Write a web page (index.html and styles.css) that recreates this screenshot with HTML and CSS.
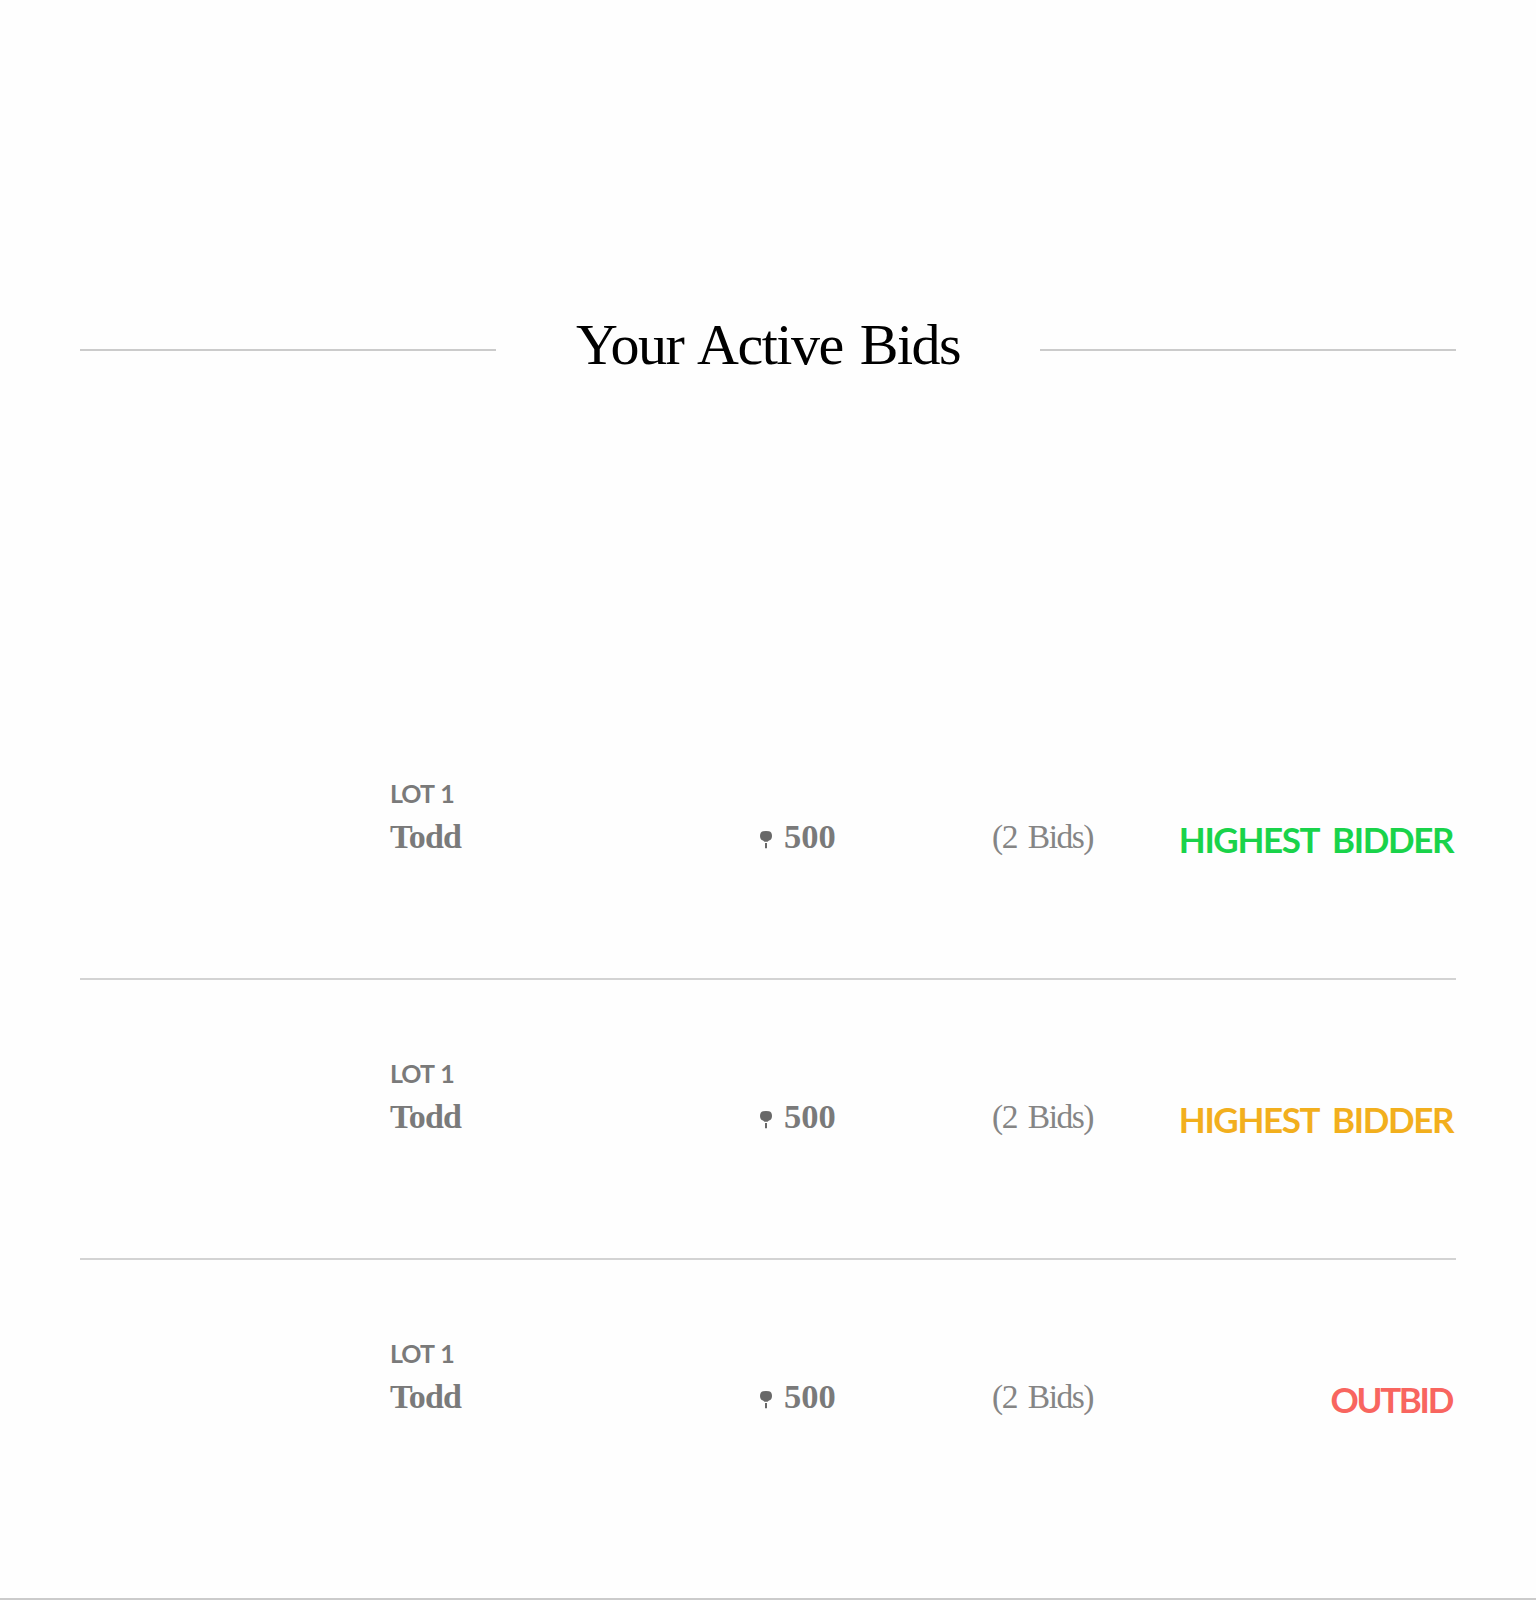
FILE: index.html
```html
<!DOCTYPE html>
<html lang="en">
<head>
<meta charset="utf-8">
<title>Your Active Bids</title>
<link rel="stylesheet" href="styles.css">
</head>
<body>
<main class="page">
  <header class="heading"><h1 class="title">Your Active Bids</h1></header>
  <section class="bids">
    <article class="bid">
      <div class="lot"><div class="lot-number">LOT 1</div><div class="lot-name">Todd</div></div>
      <div class="amount"><svg class="paddle" viewBox="0 0 12 18"><path d="M3 .2Q6-.2 9 .2Q12 .8 12 5Q12 8.5 9 9.6L7.5 10.7H4.5L3 9.6Q0 8.5 0 5Q0 .8 3 .2ZM5 12H7V17.3H5Z"/></svg><span class="price">500</span></div>
      <div class="count">(2 Bids)</div>
      <div class="status winning">HIGHEST BIDDER</div>
    </article>
    <article class="bid">
      <div class="lot"><div class="lot-number">LOT 1</div><div class="lot-name">Todd</div></div>
      <div class="amount"><svg class="paddle" viewBox="0 0 12 18"><path d="M3 .2Q6-.2 9 .2Q12 .8 12 5Q12 8.5 9 9.6L7.5 10.7H4.5L3 9.6Q0 8.5 0 5Q0 .8 3 .2ZM5 12H7V17.3H5Z"/></svg><span class="price">500</span></div>
      <div class="count">(2 Bids)</div>
      <div class="status pending">HIGHEST BIDDER</div>
    </article>
    <article class="bid">
      <div class="lot"><div class="lot-number">LOT 1</div><div class="lot-name">Todd</div></div>
      <div class="amount"><svg class="paddle" viewBox="0 0 12 18"><path d="M3 .2Q6-.2 9 .2Q12 .8 12 5Q12 8.5 9 9.6L7.5 10.7H4.5L3 9.6Q0 8.5 0 5Q0 .8 3 .2ZM5 12H7V17.3H5Z"/></svg><span class="price">500</span></div>
      <div class="count">(2 Bids)</div>
      <div class="status outbid">OUTBID</div>
    </article>
  </section>
</main>
</body>
</html>
```
FILE: styles.css
```css
* { box-sizing: border-box; }
body { margin: 0; background: #fefefe; color: #7a7a7a; font-family: "Liberation Serif", serif; }
.page { height: 1600px; padding: 300px 80px 0; border-bottom: 2px solid #cbcbcb; }
.heading { display: grid; grid-template-columns: 416px 1fr 416px; align-items: center; height: 100px; }
.heading::before, .heading::after { content: ""; height: 2px; background: #cbcbcb; }
.title { margin: 0; padding-bottom: 10px; text-align: center; color: #000; font-size: 58px; font-weight: 400; line-height: 88px; letter-spacing: -1.5px; word-spacing: 4px; white-space: nowrap; }
.bids { padding-top: 300px; }
.bid { display: grid; grid-template-columns: 370px 232px 150px 314px; height: 280px; padding: 79px 0 0 310px; border-bottom: 2px solid #d3d3d3; white-space: nowrap; }
.bid:last-child { border-bottom: 0; }
.lot-number { height: 38px; font: 700 25px/28px Lato, sans-serif; letter-spacing: -1px; word-spacing: 2px; }
.lot-name { font-size: 34px; font-weight: 700; line-height: 40px; letter-spacing: -0.8px; }
.amount { display: flex; align-items: flex-start; gap: 12px; padding-top: 37px; }
.paddle { width: 12px; height: 18px; margin-top: 15px; fill: #686868; }
.price { font-size: 34.5px; font-weight: 700; line-height: 40px; }
.count { padding-top: 38px; font-size: 33.5px; line-height: 40px; letter-spacing: -1.5px; word-spacing: 4px; color: #858585; }
.status { padding: 37px 3px 0 0; font: 700 35px/46px Lato, sans-serif; letter-spacing: -1.4px; word-spacing: 7px; text-align: right; }
.winning { color: #19d34a; }
.pending { color: #f2af1d; }
.outbid { padding-right: 4px; color: #f8655f; letter-spacing: -2.3px; }
```
